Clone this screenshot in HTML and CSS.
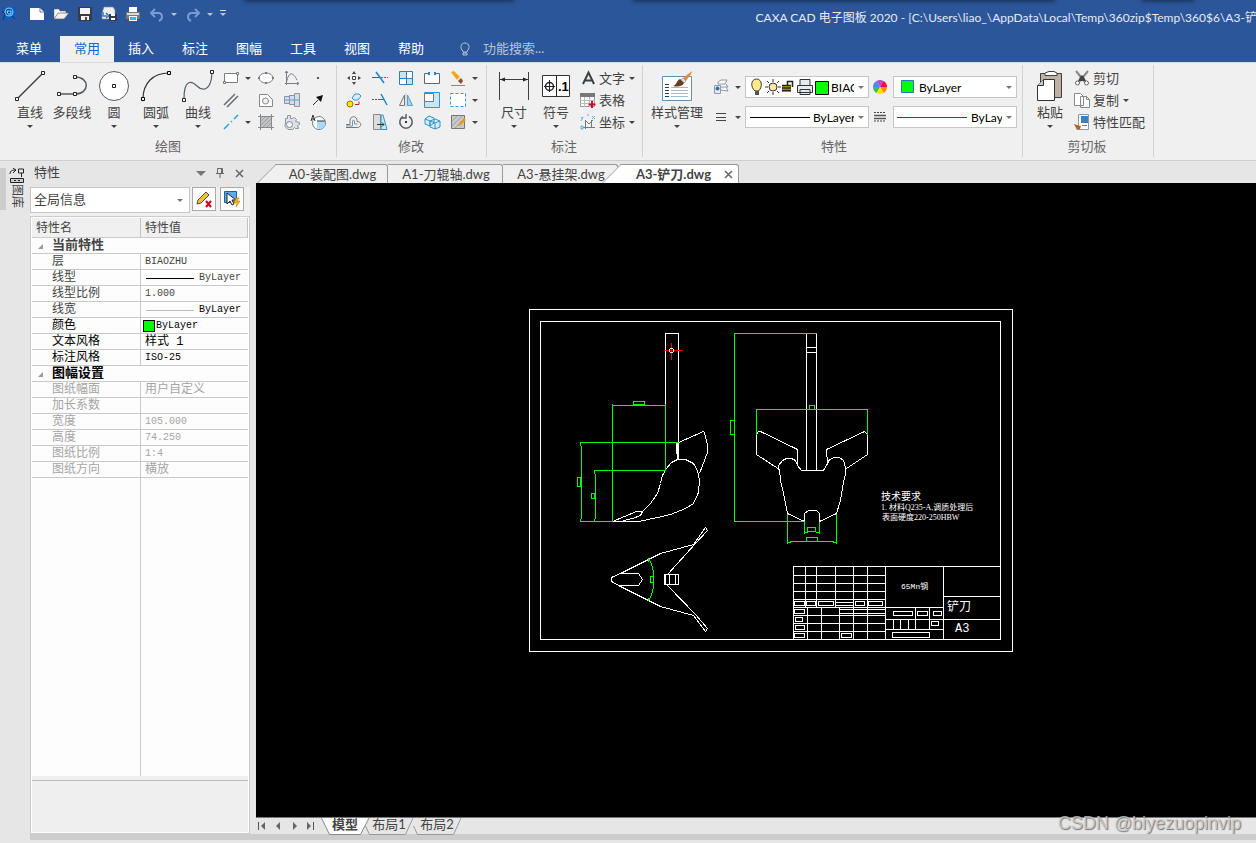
FILE: index.html
```html
<!DOCTYPE html>
<html lang="zh-CN">
  <head>
    <meta charset="UTF-8" />
    <meta name="viewport" content="width=device-width, initial-scale=1.0" />
    <title>CAXA CAD 电子图板 2020</title>
    <link rel="stylesheet" href="styles.css">
  </head>
  <body>
    <header class="title-bar">
      <i class="edge edge-1"></i><i class="edge edge-2"></i><i class="edge edge-3"></i>
      <div class="quick-access">
        <svg class="logo" width="16" height="16" viewBox="0 0 16 16"><path d="M0 1l5 2 2-2 4 1 4-1-1 4 2 3-3 1 2 4-4-2-4 2-5 3 3-6-2-2 1-2z" fill="#0a5cc8"/><circle cx="8" cy="6" r="4.500" fill="#5cc4ff"/><circle cx="8" cy="6" r="3.200" fill="#0b3f9c"/><path d="M6 5h4v3H7z" stroke="#8fe0ff" fill="none"/><path d="M1 5l3 3-2 6M11 10l3 3" stroke="#0a2f80" fill="none"/></svg>
        <button title="新建"><svg width="18" height="16"><path d="M2 2h10l4 4v8H2z" fill="#fff"/><path d="M12 2v4h4" fill="none" stroke="#777"/></svg></button>
        <button title="打开"><svg width="18" height="16"><path d="M2 3h5l1 2h6v3H6l-4 6z" fill="#fff" stroke="#555" stroke-width=".5"/><path d="M6 7h11l-5 6H2z" fill="#f1efe8" stroke="#666" stroke-width=".7"/></svg></button>
        <button title="保存"><svg width="18" height="16"><path d="M2 1h14v14H2z" fill="#3a3a44"/><path d="M4 2h10v6H4zM5 10h8v4H5z" fill="#f4f4f4"/><path d="M9 11h2v3H9z" fill="#444"/></svg></button>
        <button title="另存为"><svg width="18" height="16"><path d="M4 1h9l2 3v9H2V7z" fill="#eee" stroke="#888" stroke-width=".6"/><path d="M3 6v4h4M6 7l3 3-3 2" fill="none" stroke="#2b79c6" stroke-width="1.500"/><path d="M9 8h8v7H9z" fill="#3a3a44"/><path d="M11 8h4v2h-4zM11 12h4v2h-4z" fill="#fff"/></svg></button>
        <button title="打印"><svg width="18" height="16"><path d="M5 1h8v5H5z" fill="#fff"/><path d="M2 6h14v7H2z" fill="#77787e"/><path d="M3 7h12v2H3z" fill="#d9d9d9"/><path d="M5 10h8v5H5z" fill="#fff"/><path d="M6 11h6v3H6z" fill="#36b5e8"/></svg></button>
        <button title="撤销"><svg width="18" height="16"><path d="M7 3L3 7l4 4M3 7h7c3 0 4 2 4 4s-1 3-3 4" fill="none" stroke="#7a9bd4" stroke-width="2"/></svg></button>
        <i class="caret caret-light"></i>
        <button title="重做"><svg width="18" height="16"><path d="M11 3l4 4-4 4M15 7H8c-3 0-4 2-4 4s1 3 3 4" fill="none" stroke="#7a9bd4" stroke-width="2"/></svg></button>
        <i class="caret caret-light"></i>
        <i class="caret caret-light caret-more"></i>
      </div>
      <h1 class="title">CAXA CAD 电子图板 2020 - [C:\Users\liao_\AppData\Local\Temp\360zip$Temp\360$6\A3-铲刀</h1>
    </header>

    <nav class="menu">
      <a href="#" class="file">菜单</a>
      <a href="#" class="active">常用</a>
      <a href="#">插入</a>
      <a href="#">标注</a>
      <a href="#">图幅</a>
      <a href="#">工具</a>
      <a href="#">视图</a>
      <a href="#">帮助</a>
      <label class="search" for="search">
        <svg width="12" height="14"><path d="M4 9C1 7 1 1 6 1s5 6 2 8v1H4zM4 11h4v2H4z" fill="none" stroke="#b9c3d6"/></svg>
      </label>
      <input id="search" class="search-box" type="text" placeholder="功能搜索...">
    </nav>

    <section class="ribbon">
      <div class="group draw-group">
        <div class="tools">
          <button class="big"><svg width="34" height="34"><path d="M4 30L29 5" stroke="#3b3f46" stroke-width="1.500"/><path d="M2.500 28.500h3v3h-3zM28.500 2.500h3v3h-3z" fill="#fff" stroke="#222"/></svg>直线<i class="caret"></i></button>
          <button class="big"><svg width="34" height="34"><path d="M4 25h16c15 0 15-17 0-17" fill="none" stroke="#555b64" stroke-width="1.500"/><path d="M2.500 23.500h3v3h-3zM18.500 23.500h3v3h-3zM18.500 6.500h3v3h-3z" fill="#fff" stroke="#222"/></svg>多段线</button>
          <button class="big"><svg width="34" height="34"><circle cx="17" cy="17" r="14.500" fill="#fff" stroke="#555b64"/><path d="M15.500 15.500h3v3h-3z" fill="#fff" stroke="#222"/></svg>圆<i class="caret"></i></button>
          <button class="big"><svg width="34" height="34"><path d="M4 30C4 14 14 4 30 4" fill="none" stroke="#333" stroke-width="1.200"/><path d="M2.500 28.500h3v3h-3zM28.500 2.500h3v3h-3z" fill="#fff" stroke="#000"/></svg>圆弧<i class="caret"></i></button>
          <button class="big"><svg width="34" height="34"><path d="M3 30c0-21 8-18 13-13S30 23 31 4" fill="none" stroke="#555b64" stroke-width="1.200"/><path d="M1.500 29.500h3v3h-3zM29.500 1.500h3v3h-3z" fill="#fff" stroke="#222"/></svg>曲线<i class="caret"></i></button>
          <div class="small-grid draw-grid">
            <button title="矩形"><svg width="18" height="18"><path d="M2.500 4.500h13v9h-13z" fill="#fff" stroke="#777c85"/><path d="M1.500 12.500h2v2h-2zM14.500 3.500h2v2h-2z" fill="#fff" stroke="#777"/></svg><i class="caret"></i></button>
            <button title="椭圆"><svg width="18" height="18"><ellipse cx="9" cy="9" rx="7" ry="5" fill="#fff" stroke="#777c85"/><path d="M1 8h2v2H1zM15 8h2v2h-2zM8 3h2v2H8zM8 13h2v2H8z" fill="#777c85"/></svg></button>
            <button title="公式曲线"><svg width="18" height="18"><path d="M3.500 2v14M2 14.500h14M3.500 13C6 2 10 3 14 11" fill="none" stroke="#777c85"/><path d="M2 4l1.500-2L5 4M14 13l2 1.500-2 1.500" fill="none" stroke="#777"/></svg></button>
            <button title="点"><svg width="18" height="18"><path d="M8 8h2v2H8z" fill="#555"/></svg></button>
            <button title="平行线"><svg width="18" height="18"><path d="M2 14L13 3M5 16L16 5" stroke="#666b74" stroke-width="1.500"/></svg></button>
            <button title="局部放大"><svg width="18" height="18"><path d="M2.500 3.500h8l5 5v7h-13z" fill="#fff" stroke="#888"/><circle cx="8.500" cy="10" r="3" fill="#f0f0f0" stroke="#888"/></svg></button>
            <button title="孔轴"><svg width="18" height="18"><path d="M1.500 5.500h5v-1h5v-2h5v13h-5v-2h-5v-1h-5z" fill="#d6dde8" stroke="#8a93a2"/><path d="M1 9h16" stroke="#4aa3df"/><path d="M6.500 4v9M11.500 3v12" stroke="#8a93a2"/></svg></button>
            <button title="箭头"><svg width="18" height="18"><path d="M4 14l5-5" stroke="#333"/><path d="M14 4l-2 7-5-5z" fill="#111"/></svg></button>
            <button title="中心线"><svg width="18" height="18"><path d="M2 16l5-5M9 9l1-1M12 6l4-4" stroke="#27a5e0" stroke-width="1.500"/></svg><i class="caret"></i></button>
            <button title="填充"><svg width="18" height="18"><path d="M4 4h10v10H4z" fill="#bfc1c5"/><path d="M3.500 1v16M14.500 1v16M1 3.500h16M1 14.500h16" stroke="#888"/><path d="M4 8l4-4M4 12l8-8M6 14l8-8M10 14l4-4" stroke="#a0a2a6"/></svg></button>
            <button title="齿轮"><svg width="18" height="18"><path d="M2.500 9V5.500h2v-3h3v3h2l2-1 2 2-1 2 4 1v2l-2 1 1 3h-3l-1-1-2 2H5l-3-3z" fill="#dde1e8" stroke="#8d95a2"/><circle cx="6.500" cy="11.500" r="3" fill="#fff" stroke="#7d8592"/></svg></button>
            <button title="圆形阵列"><svg width="18" height="18"><circle cx="10" cy="10" r="6.500" fill="#fff" stroke="#777c85"/><path d="M8 8h8c1 5-2 8-6 8-1 0-2-1-2-2z" fill="#a8dbf7"/><path d="M2 8l2-6 2 6M3 6h2M8 8h8" stroke="#333" fill="none"/></svg></button>
          </div>
        </div>
        <h2>绘图</h2>
      </div>

      <div class="group">
        <div class="tools">
          <div class="small-grid edit-grid">
            <button title="平移"><svg width="18" height="18"><path d="M7.500 7.500h3v3h-3z" fill="#fff" stroke="#444"/><path d="M9 2l2 3H7zM9 16l2-3H7zM2 9l3-2v4zM16 9l-3-2v4z" fill="#444a52"/></svg></button>
            <button title="裁剪"><svg width="18" height="18"><path d="M1 8.500h8" stroke="#555b64"/><path d="M10 8.500h2M13 8.500h2M16 8.500h1" stroke="#1d84d0"/><path d="M5 3l8 11" stroke="#1d84d0" stroke-width="1.500"/></svg></button>
            <button title="阵列"><svg width="18" height="18"><path d="M2.500 2.500h13v13h-13z" fill="#fff" stroke="#2f7fb8"/><path d="M3 3h6v6H3zM10 10h5v5h-5z" fill="#bfe6fa"/><path d="M2 9.500h14M9.500 2v14" stroke="#2f7fb8"/></svg></button>
            <button title="打断"><svg width="18" height="18"><path d="M5 4.500H1.500v10h15v-10H13" fill="#fff" stroke="#666"/><path d="M5 3h2v3H5zM11 3h2v3h-2z" fill="#1d84d0"/></svg></button>
            <button title="删除"><svg width="18" height="18"><path d="M2 3l3-1 6 6-3 3z" fill="#f5a51c"/><path d="M8 11l3-3 1 1-3 3z" fill="#eee"/><path d="M9 12l3-3 2 3-2 3z" fill="#8b4a2c"/><path d="M2 16.500h14" stroke="#888"/></svg><i class="caret"></i></button>
            <button title="复制"><svg width="18" height="18"><circle cx="5" cy="13" r="3" fill="#ffe500" stroke="#8a7a00"/><path d="M7 7l3-4h4l2 2-3 4H9z" fill="#d3effc" stroke="#3b93c9"/><path d="M10 13.500h4v-3" fill="none" stroke="#c22"/></svg></button>
            <button title="延伸"><svg width="18" height="18"><path d="M1 8.500h2M4 8.500h2M7 8.500h6" stroke="#555b64"/><path d="M10 3l6 11" stroke="#1d84d0" stroke-width="1.500"/></svg></button>
            <button title="镜像"><svg width="18" height="18"><path d="M7.500 4v10.500h-5z" fill="#eee" stroke="#777"/><path d="M10.500 4v10.500h5z" fill="#9dd7f5" stroke="#5b9fc5"/><path d="M9 2v14" stroke="#ccc"/></svg></button>
            <button title="缩放"><svg width="18" height="18"><path d="M1.500 1.500h15v15h-15z" fill="#c5e9fb" stroke="#3b93c9"/><path d="M1.500 2.500h9v8h-9z" fill="#fff" stroke="#777"/></svg></button>
            <button title="选择"><svg width="18" height="18"><path d="M1.500 2.500h15v13h-15z" fill="#fff" stroke="#3399cc" stroke-dasharray="3 2"/></svg><i class="caret"></i></button>
            <button title="等距线"><svg width="18" height="18"><path d="M1 11.500h4v-4c0-5 7-5 7 0v1c5 0 5 6 0 6H1" fill="none" stroke="#777"/><path d="M1 13h6.500V8c0-1 2-1 2 0v3h3" fill="none" stroke="#6b95b5"/></svg></button>
            <button title="拉伸"><svg width="18" height="18"><path d="M2.500 1.500h7v15h-7z" fill="#ddd" stroke="#888"/><path d="M10 2h2l4 14.500h-6z" fill="#c5e9fb" stroke="#3b93c9"/><path d="M6 11.500h7M11 9.500l2 2-2 2" fill="none" stroke="#333"/></svg></button>
            <button title="旋转"><svg width="18" height="18"><path d="M6 3.500a6.200 6.200 0 1 0 6 0M9 1v4H5" fill="none" stroke="#555b64" stroke-width="1.500"/><path d="M8 8h2v2H8z" fill="#333"/></svg></button>
            <button title="分解"><svg width="18" height="18"><path d="M2 6l4-3 5 2v5l-4 3-5-2zM7 8l5-2 5 2v6l-5 2-5-2z" fill="#d3effc" stroke="#3b8fc4"/><path d="M2 6l5 2v5M7 8l5 2 5-2M12 10v6" fill="none" stroke="#3b8fc4"/></svg></button>
            <button title="编辑填充"><svg width="18" height="18"><path d="M2.500 2.500h13v13h-13z" fill="#c7c8ca" stroke="#777"/><path d="M3 8l5-5M3 13L13 3M6 15l9-9" stroke="#a0a2a6"/><path d="M9 13l1-3 5-5 2 2-5 5z" fill="#e59b2b"/></svg><i class="caret"></i></button>
          </div>
        </div>
        <h2>修改</h2>
      </div>

      <div class="group note-group">
        <div class="tools">
          <button class="big"><svg width="34" height="34"><path d="M2.500 3v28M31.500 3v28M3 10.500h28" stroke="#3b3f46"/><path d="M3 10.500l5-2v4zM31 10.500l-5-2v4z" fill="#222"/></svg>尺寸<i class="caret"></i></button>
          <button class="big"><svg width="34" height="34"><path d="M3.500 6.500h27v21h-27z" fill="#fff" stroke="#333"/><path d="M17.500 6v22M10.500 11v12M5 17.500h11" stroke="#222"/><circle cx="10.500" cy="17.500" r="4" fill="none" stroke="#222" stroke-width="1.500"/><text x="19" y="22" class="icon-text">.1</text></svg>符号<i class="caret"></i></button>
          <div class="rows">
            <button class="row"><svg width="18" height="18"><path d="M4 15L9.500 3.500l5.500 11.500M6 11.500h7" fill="none" stroke="#3b3f46" stroke-width="2"/></svg>文字<i class="caret"></i></button>
            <button class="row"><svg width="18" height="18"><path d="M1.500 3.500h14v12h-14z" fill="#fff" stroke="#999"/><path d="M1 2h15v4H1z" fill="#777"/><path d="M1 9.500h15M1 12.500h15M5.500 6v10M10.500 6v10" stroke="#bbb"/><path d="M13 10v7M9.500 13.500h7" stroke="#c8102e" stroke-width="2"/></svg>表格</button>
            <button class="row"><svg width="18" height="18"><path d="M6.500 7v9M4 14.500h12M6 7l4 4 4-4M12.500 7v7" fill="none" stroke="#777"/><path d="M2 4l2 2M4 4l-2 4M8 2h2M13 3l3 3M16 3l-3 3M2 13h2v3H2z" stroke="#5fb0dc" fill="none"/></svg>坐标<i class="caret"></i></button>
          </div>
        </div>
        <h2>标注</h2>
      </div>

      <div class="group props-group">
        <div class="tools">
          <button class="big wide"><svg width="34" height="34"><path d="M2.500 7.500h29v24h-29z" fill="#fff" stroke="#6c8ca8"/><path d="M5 15.500h4M5 18.500h4M5 21.500h4M5 24.500h4M5 27.500h4" stroke="#26415c"/><path d="M11 18.500h17M11 21.500h17M11 24.500h17M11 27.500h17" stroke="#aab8c6"/><path d="M32 2l-9 7 3 3 5-7z" fill="#d9903f"/><path d="M23 9l3 3-2 2-4-3z" fill="#ddd" stroke="#777" stroke-width=".5"/><path d="M20 10l4 4c-2 4-7 4-11 3 4-1 3-5 7-7z" fill="#6b3b1e"/></svg>样式管理<i class="caret"></i></button>
          <div class="layer-grid">
            <button title="图层"><svg width="18" height="18"><path d="M6 4l3-2h6l-2 4H6zM8 9h8l-2-3M9 12l7 1-2-4" fill="#fff" stroke="#8f9aa8"/><path d="M2.500 7.500h6v8h-6z" fill="#e6eaf0" stroke="#8f9aa8"/><circle cx="5.500" cy="10.500" r="2" fill="#39739d"/></svg><i class="caret"></i></button>
            <div class="combo">
              <svg width="80" height="18" viewBox="0 0 80 18"><path d="M6 13C1 9 2 1 7.500 1S14 9 9.500 13z" fill="#ffe98a" stroke="#333"/><path d="M6 13h4v4H6z" fill="#555"/><circle cx="24" cy="9" r="4" fill="#ffe9a8" stroke="#333"/><path d="M24 1v3M24 14v3M16 9h3M29 9h3M18 3l2 2M28 13l2 2M30 3l-2 2M20 13l-2 2" stroke="#333"/><path d="M33 7h9v7h-9z" fill="#b8b000"/><path d="M33 7.500h9M33 10h9M33 12.500h9M38.500 7V3.500h5V9" fill="none" stroke="#222" stroke-width="1.500"/><path d="M51 1.500h10v6H51zM48.500 7.500h15v7h-15zM51 11.500h10v5H51z" fill="#e3ebf2" stroke="#333"/><path d="M66.500 3.500h13v13h-13z" fill="#0f0" stroke="#000"/></svg>
              <select aria-label="图层"><option>BIAOZHU</option></select><i class="caret"></i>
            </div>
            <button title="颜色"><svg width="18" height="18" viewBox="-9 -9 18 18"><path d="M0 0L-3.500-6A7 7 0 0 1 3.500-6z" fill="#b34bd8"/><path d="M0 0L3.500-6A7 7 0 0 1 7 0z" fill="#f04"/><path d="M0 0H7A7 7 0 0 1 3.500 6z" fill="#ff8a00"/><path d="M0 0L3.500 6A7 7 0 0 1-3.500 6z" fill="#ffe100"/><path d="M0 0L-3.500 6A7 7 0 0 1-7 0z" fill="#3ac24a"/><path d="M0 0H-7A7 7 0 0 1-3.500-6z" fill="#4a86ff"/></svg></button>
            <div class="combo">
              <svg width="20" height="14"><path d="M4.500 .5h12v12h-12z" fill="#0f0" stroke="#2f6fc0"/></svg>
              <select aria-label="颜色"><option>ByLayer</option></select><i class="caret"></i>
            </div>
            <button title="线型"><svg width="18" height="18"><path d="M4 5.500h10M4 9.500h10M4 12.500h10" stroke="#444"/></svg><i class="caret"></i></button>
            <div class="combo">
              <svg width="62" height="3"><path d="M1 1.500h60" stroke="#000"/></svg>
              <select aria-label="线型"><option>ByLayer</option></select><i class="caret"></i>
            </div>
            <button title="线宽"><svg width="18" height="18"><path d="M3 4.500h12M3 13h12" stroke="#444" stroke-dasharray="2 1"/><path d="M3 7.500h12M3 10.500h12" stroke="#555" stroke-width="1.500"/></svg></button>
            <div class="combo">
              <svg width="72" height="3"><path d="M0 1.500h70" stroke="#e00000"/></svg>
              <select aria-label="线宽"><option>ByLayer</option></select><i class="caret"></i>
            </div>
          </div>
        </div>
        <h2>特性</h2>
      </div>

      <div class="group clip-group">
        <div class="tools">
          <button class="big"><svg width="34" height="34"><path d="M7.500 4.500h21v24h-21z" fill="#bdb1a4" stroke="#3b3f46"/><path d="M12 6.500V4l4-1.500h5L24 4v2.500z" fill="#fff" stroke="#3b3f46"/><path d="M10.500 10.500h11v21h-17v-15z" fill="#fff" stroke="#333"/><path d="M10.500 10.500v6h-6" fill="#ccc" stroke="#333"/></svg>粘贴<i class="caret"></i></button>
          <div class="rows">
            <button class="row"><svg width="18" height="18"><path d="M3 2l9 11M15 2L6 13" stroke="#888" stroke-width="2"/><path d="M7 8l2-2 2 2 2 4H5z" fill="#444"/><circle cx="4.500" cy="14" r="2" fill="#fff" stroke="#666"/><circle cx="13.500" cy="14" r="2" fill="#fff" stroke="#666"/></svg>剪切</button>
            <button class="row"><svg width="18" height="18"><path d="M1.500 2.500h6l3 3v9h-9zM7.500 5.500h6l3 3v8h-9z" fill="#fff" stroke="#888"/><path d="M13.500 5.500v3h3" fill="none" stroke="#888"/></svg>复制<i class="caret"></i></button>
            <button class="row"><svg width="18" height="18"><path d="M5.500 1.500h10v15h-10z" fill="#fff" stroke="#8b9aa9"/><path d="M8 3h7v7H8z" fill="#3f7fbe"/><path d="M9 12.500h5" stroke="#777"/><path d="M1 11l3 1 4 1-1 3-3 1z" fill="#b0661f"/></svg>特性匹配</button>
          </div>
        </div>
        <h2>剪切板</h2>
      </div>
    </section>

    <main class="workspace">
      <aside class="library">
        <button>
          <svg width="16" height="16"><path d="M1 6c0-3 2-4 5-4M4 0l3 2-3 3M9.500 1v4h5V1zM12.500 5v4" fill="none" stroke="#222"/><path d="M1.500 10.500h13v4h-13z" fill="#ccc" stroke="#222"/><path d="M5 12.500h2M9 12.500h2" stroke="#222"/></svg>
          <span>图库</span>
        </button>
      </aside>

      <section class="properties">
        <header class="panel-title">
          <h2>特性</h2>
          <button title="选项"><svg width="12" height="12"><path d="M1 4h10L6 9z" fill="#777"/></svg></button>
          <button title="固定"><svg width="12" height="12"><path d="M3.500 6V1.500h5V6M2 6.500h8M6 7v4M7.500 2v4" fill="none" stroke="#666"/></svg></button>
          <button title="关闭"><svg width="12" height="12"><path d="M3 3l7 7M10 3l-7 7" stroke="#666" stroke-width="1.500"/></svg></button>
        </header>
        <div class="selector">
          <div class="combo"><select aria-label="对象"><option>全局信息</option></select><i class="caret"></i></div>
          <button title="清除选择"><svg width="18" height="18"><path d="M2 14l1-4 8-8 3 3-8 8z" fill="#f4c430" stroke="#544"/><path d="M11 11l5 6M16 11l-5 6" stroke="#d0021b" stroke-width="2"/></svg></button>
          <button title="快速选择"><svg width="18" height="18"><path d="M1.500 1.500h12v11h-12z" fill="#5aa9ea" stroke="#1f5fa8"/><path d="M4 3v11l3-3 2 4 2-1-2-4h4z" fill="#fff" stroke="#222"/><path d="M13 8l-2 5h3l-1 4 4-6h-3l2-3z" fill="#ffb400" stroke="#b86b00" stroke-width=".5"/></svg></button>
        </div>
        <div class="sheet">
          <table>
            <thead>
              <tr><th class="name">特性名</th><th>特性值</th></tr>
            </thead>
            <tbody>
              <tr class="section soft"><th colspan="2"><i class="fold"></i>当前特性</th></tr>
              <tr class="soft"><td>层</td><td>BIAOZHU</td></tr>
              <tr class="soft"><td>线型</td><td><div class="sample"><i class="rule"></i>ByLayer</div></td></tr>
              <tr class="soft"><td>线型比例</td><td>1.000</td></tr>
              <tr><td class="soft">线宽</td><td><div class="sample"><i class="rule thin"></i>ByLayer</div></td></tr>
              <tr><td>颜色</td><td><div class="sample"><i class="swatch"></i>ByLayer</div></td></tr>
              <tr><td>文本风格</td><td class="cn">样式 1</td></tr>
              <tr><td>标注风格</td><td>ISO-25</td></tr>
              <tr class="section"><th colspan="2"><i class="fold"></i>图幅设置</th></tr>
              <tr class="off"><td>图纸幅面</td><td class="cn">用户自定义</td></tr>
              <tr class="off"><td>加长系数</td><td></td></tr>
              <tr class="off"><td>宽度</td><td>105.000</td></tr>
              <tr class="off"><td>高度</td><td>74.250</td></tr>
              <tr class="off"><td>图纸比例</td><td>1:4</td></tr>
              <tr class="off"><td>图纸方向</td><td class="cn">横放</td></tr>
            </tbody>
          </table>
          <div class="blank"><div></div></div>
          <div class="hint"></div>
        </div>
      </section>

      <section class="document">
        <nav class="doc-tabs">
          <a href="#" class="slant">A0-装配图.dwg</a>
          <a href="#">A1-刀辊轴.dwg</a>
          <a href="#">A3-悬挂架.dwg</a>
          <a href="#" class="slant current">A3-铲刀.dwg<svg width="9" height="9"><path d="M1 1l7 7M8 1L1 8" stroke="#666" stroke-width="1.500"/></svg></a>
        </nav>

        <div class="canvas">
          <svg width="500" height="360" viewBox="526 303 500 360" class="drawing">
            <g transform="translate(.5 .5)">
              <!-- sheet border -->
              <path d="M529 309H1012V651H529zM540 321H1000V639H540z"/>

              <!-- side view -->
              <path d="M665 403V333H678V459M677 443V459"/>
              <path d="M612 521L636 511H642L650 503L657 493L660 483L662 475L666 468L671 462L677 459H685L693 463L697 470L699 480L698 492L693 503L685 508L670 514L657 517L638 521H612"/>
              <path d="M642 511L640 515L632 518L623 520"/>
              <path d="M676 451V443L703 431L704 432L707 445V452L699 473M676 451L678 459"/>
              <g class="dim">
                <path d="M612 521V403M612 405H665M665 403V470M579 442H678M593 470H665M579 521H612"/>
                <path d="M580 442V445M581 445V518M580 518V521M594 470V473M595 473V518M594 518V521"/>
                <path d="M633 401H644V404H633zM577 477H580V486H577zM591 493H594V498H591z"/>
              </g>
              <path d="M663 350H682M671 342V359" class="origin"/>
              <circle cx="671" cy="350" r="2"/>

              <!-- front view -->
              <path d="M806 333V470M816 333V470M806 347H816M806 352H816"/>
              <path d="M779 469L756 454V434L758 431H760L797 449V465"/>
              <path d="M846 468L867 454V434L864 431L826 449V456L827 457V463"/>
              <path d="M778 469V465L782 460L786 458H791L795 460L797 465L801 470H823L826 465L829 459L834 457H839L843 460L845 467V473L842 487L840 500L836 513L819 521V513L816 510H808L804 513V521L787 513L783 493L780 480L779 469"/>
              <g class="dim">
                <path d="M733 333H816M734 333V521M733 521H804M756 408V434M867 408V434M756 409H867"/>
                <path d="M787 513V543M836 513V543M787 542H790V541H833V542H836M804 521V533M819 521V533M804 532H807V531M819 532H816V531"/>
                <path d="M730 420H734V434H730zM809 405H814V409H809zM807 527H815V531H807zM806 537H817V541H806z"/>
              </g>

              <!-- top view -->
              <path d="M611 579V577L620 573L660 553L693 544L705 527L707 530L695 543L667 574"/>
              <path d="M611 579V581L620 586L660 606L693 615L705 631L707 628L695 614L667 585"/>
              <path d="M618 573H638L642 579L638 585H618M664 574H678V584H664zM665 574V584M669 574V584M675 574V584"/>
              <g class="dim">
                <path d="M648 558L651 563L653 572V586L651 595L648 600M648 558V561M648 597V600M650 576H653V582H650z"/>
              </g>

              <!-- title block -->
              <path d="M793 639V566H1000M885 566V639M943 566V639M943 596H1000M943 619H1000"/>
              <path d="M793 575H885M793 583H885M793 591H885M793 599H885M793 607H943M793 615H885M793 623H885M793 631H885"/>
              <path d="M805 566V607M816 566V607M835 566V607M853 566V607M867 566V607"/>
              <path d="M807 607V639M821 607V639M839 607V639M853 607V639M867 607V639M835 602H853M835 605H853M839 609H885M839 613H885"/>
              <path d="M794 601H804V605H794zM806 601H815V605H806zM818 601H833V605H818zM855 601H864V605H855zM868 601H882V605H868z"/>
              <path d="M794 609H804V613H794zM795 617H802V621H795zM795 625H804V629H795zM794 633H804V637H794zM841 633H851V637H841z"/>
              <path d="M885 619H943M885 629H943M915 607V629M929 607V629M893 619V629M900 619V629M908 619V629"/>
              <path d="M893 611H912V615H893zM917 611H927V615H917zM933 611H941V615H933zM931 621H938V625H931zM892 632H929V637H892z"/>
            </g>
            <text x="881" y="500" class="head-note">技术要求</text>
            <text x="881" y="510" class="small-note">1. 材料Q235-A,调质处理后</text>
            <text x="882" y="520" class="small-note">表面硬度220-250HBW</text>
            <text x="901" y="589" class="material">65Mn钢</text>
            <text x="947" y="611" class="part">铲刀</text>
            <text x="955" y="632" class="part">A3</text>
          </svg>
        </div>

        <nav class="layout-tabs">
          <button title="第一页"><svg width="12" height="12"><path d="M2.500 2v8" stroke="#555"/><path d="M9 2v8L5 6z" fill="#666"/></svg></button>
          <button title="上一页"><svg width="12" height="12"><path d="M8 2v8L4 6z" fill="#666"/></svg></button>
          <button title="下一页"><svg width="12" height="12"><path d="M5 2v8l4-4z" fill="#666"/></svg></button>
          <button title="最后一页"><svg width="12" height="12"><path d="M9.500 2v8" stroke="#555"/><path d="M3 2v8l4-4z" fill="#666"/></svg></button>
          <a href="#" class="current"><svg width="49" height="17"><path d="M.5 0l8 16.500h31L48 0" fill="#fff" stroke="#888"/></svg><span>模型</span></a>
          <a href="#"><svg width="49" height="17"><path d="M.5 8l4 8.500h36L48 0" fill="none" stroke="#999"/></svg><span>布局1</span></a>
          <a href="#"><svg width="49" height="17"><path d="M.5 8l4 8.500h36L48 0" fill="none" stroke="#999"/></svg><span>布局2</span></a>
        </nav>
      </section>
    </main>
    <footer class="bottom-bar"></footer>
    <p class="watermark">CSDN @biyezuopinvip</p>
  </body>
</html>
```
FILE: styles.css
```css
* {
  box-sizing: border-box;
}

body {
  display: flex;
  flex-direction: column;
  min-height: 100vh;
  margin: 0;
  overflow: hidden;
  position: relative;
  font-family: Lato, "Noto Sans CJK SC", sans-serif;
  font-size: 13px;
  color: #444;
  background-color: #e6e6e6;
}

button,
select,
input {
  font: inherit;
  color: inherit;
  padding: 0;
  border: none;
  background: none;
}

a {
  color: inherit;
  text-decoration: none;
}

h1,
h2,
p {
  margin: 0;
  font-size: 13px;
  font-weight: normal;
}

svg {
  display: block;
  flex: none;
}

.caret {
  flex: none;
  width: 0;
  height: 0;
  border: 3px solid transparent;
  border-top-color: #444;
  border-bottom: none;
}

.caret-light {
  border-top-color: #b9c3d6;
}

/* title bar */
.title-bar {
  display: flex;
  align-items: center;
  height: 36px;
  position: relative;
  overflow: hidden;
  color: #e6ebf4;
  background-color: #2b579a;
}

.edge {
  position: absolute;
  top: -4px;
  height: 4px;
  box-shadow: 0 0 5px 1px #14284a;
}

.edge-1 {
  left: 245px;
  width: 268px;
}

.edge-2 {
  left: 634px;
  width: 420px;
}

.edge-3 {
  left: 1143px;
  width: 50px;
}

.quick-access {
  display: flex;
  align-items: center;
  gap: 6px;
  flex: 0 0 60%;
  padding: 0 0 8px 1px;
}

.logo {
  margin-right: 5px;
}

.quick-access .caret {
  margin: 0 1px 0 -1px;
}

.quick-access .caret-more {
  margin-left: 0;
  position: relative;
}

.caret-more::before {
  content: "";
  position: absolute;
  left: -3px;
  top: -6px;
  width: 6px;
  height: 1px;
  background-color: #d6dce8;
}

.title {
  padding: 0 0 4px 2px;
  font-size: 12px;
  white-space: nowrap;
}

/* menu */
.menu {
  display: flex;
  align-items: stretch;
  height: 26px;
  padding-left: 2px;
  color: #fff;
  background-color: #2b579a;
}

.menu a {
  width: 54px;
  line-height: 24px;
  text-align: center;
}

.menu .file {
  margin-right: 4px;
}

.menu .active {
  color: #1765c1;
  background-color: #f0f0f0;
}

.search {
  display: flex;
  align-items: center;
  margin: 0 12px 0 21px;
}

.search-box {
  width: 120px;
  height: 24px;
}

.search-box::placeholder {
  color: #b9c3d6;
}

/* ribbon */
.ribbon {
  display: flex;
  height: 99px;
  padding: 2px 0 3px;
  border-top: 1px solid #dadada;
  border-bottom: 1px solid #cfcfcf;
  background-color: #f0f0f0;
}

.group {
  display: flex;
  flex-direction: column;
  padding: 2px 9px 0 8px;
  border-right: 1px solid #d2d2d2;
}

.group h2 {
  height: 20px;
  line-height: 19px;
  text-align: center;
  color: #666;
}

.tools {
  display: flex;
  flex: 1;
}

.big {
  display: flex;
  flex-direction: column;
  align-items: center;
  width: 42px;
  height: 66px;
  padding-top: 2px;
  line-height: 18px;
  white-space: nowrap;
}

.big .caret {
  margin-top: 4px;
}

.wide {
  width: 52px;
}

.small-grid {
  display: grid;
  grid-auto-rows: 22px;
}

.draw-group {
  padding-left: 9px;
}

.draw-grid {
  grid-template-columns: 35px 26px 26px 18px;
  margin-left: 3px;
}

.edit-grid {
  grid-template-columns: 26px 26px 26px 26px 28px;
}

.small-grid button,
.layer-grid button,
.row {
  display: flex;
  align-items: center;
}

.small-grid .caret,
.layer-grid .caret {
  margin-left: 5px;
}

.note-group {
  padding: 2px 7px 0 6px;
}

.rows {
  display: grid;
  grid-auto-rows: 22px;
  margin-left: 2px;
}

.row {
  line-height: 18px;
}

.row svg {
  margin-right: 2px;
}

.row .caret {
  margin-left: 4px;
}

.props-group {
  padding: 2px 5px 0 8px;
}

.layer-grid {
  display: grid;
  grid-template-columns: 33px 124px 24px 124px;
  grid-auto-rows: 30px;
  align-items: center;
  margin: 5px 0 0 9px;
}

.layer-grid > button:nth-child(4n + 3) {
  margin-left: 2px;
}

.combo {
  display: flex;
  align-items: center;
  height: 22px;
  padding: 0 4px 0 3px;
  border: 1px solid #c6c6c6;
  color: #000;
  background-color: #fff;
}

.combo select {
  flex: 1;
  min-width: 0;
  margin-left: 2px;
  appearance: none;
  overflow: hidden;
  text-overflow: clip;
  white-space: nowrap;
  font-size: 12px;
}

.combo .caret {
  margin-left: 4px;
  border-top-color: #777;
}

.icon-text {
  font: bold 13px "Liberation Sans", sans-serif;
}

.clip-group {
  padding: 2px 8px 0 6px;
}

/* workspace */
.workspace {
  display: flex;
  flex: 1;
}

.library {
  width: 30px;
  padding-top: 7px;
}

.library button {
  display: flex;
  flex-direction: column;
  align-items: center;
  width: 26px;
  height: 42px;
  padding-left: 2px;
  border-left: 6px solid #cdcdcd;
}

.library span {
  writing-mode: vertical-rl;
  text-orientation: sideways;
  line-height: 16px;
  font-size: 12px;
}

.properties {
  display: flex;
  flex-direction: column;
  width: 220px;
  margin-right: 6px;
  background-color: #f0f0f0;
}

.panel-title {
  display: flex;
  align-items: center;
  gap: 7px;
  height: 26px;
  padding: 0 5px 2px 4px;
  background-color: #e6e6e6;
}

.panel-title h2 {
  flex: 1;
  line-height: 20px;
  padding-bottom: 2px;
}

.selector {
  display: flex;
  gap: 4px;
  margin-bottom: 3px;
}

.selector .combo {
  width: 160px;
  height: 26px;
  margin-right: -2px;
  padding-right: 6px;
}

.selector select {
  margin-left: 0;
  padding-bottom: 2px;
  font-size: 13px;
  color: #444;
}

.selector button {
  display: flex;
  align-items: center;
  justify-content: center;
  width: 24px;
  height: 24px;
  border: 1px solid #aaa;
  background-color: #fdfdfd;
}

.sheet {
  display: flex;
  flex-direction: column;
  flex: 1;
  padding: 1px;
  border: 1px solid #ccc;
  background-color: #fdfdfd;
}

table {
  width: 100%;
  border-collapse: separate;
  border-spacing: 0;
  table-layout: fixed;
  font-family: "Liberation Mono", "Noto Sans CJK SC", monospace;
  font-size: 12px;
  line-height: 14px;
  color: #000;
}

thead th {
  height: 20px;
  padding: 3px 4px 0;
  border-right: 1px solid #c2c2c2;
  border-bottom: 1px solid #ccc;
  font-weight: normal;
  text-align: left;
  color: #444;
  background-color: #f0f0f0;
}

thead .name {
  width: 109px;
}

tbody td,
tbody th {
  height: 16px;
  padding: 1px 4px 0 20px;
  border-bottom: 1px solid #c8c8c8;
  text-align: left;
  white-space: nowrap;
}

tbody td:first-child {
  border-right: 1px solid #c8c8c8;
}

tbody td:last-child {
  padding-left: 4px;
  font-size: 10px;
}

tbody td.cn:last-child {
  font-size: 12px;
}

.section th {
  position: relative;
  font-size: 13px;
}

.fold {
  position: absolute;
  left: 6px;
  top: 6px;
  border-left: 5px solid transparent;
  border-bottom: 5px solid #999;
}

.soft {
  color: #444;
}

.off {
  color: #a5a5a5;
}

.sample {
  display: flex;
  align-items: center;
}

.rule {
  width: 48px;
  margin: 0 5px 0 1px;
  border-top: 1px solid #000;
}

.thin {
  border-color: #bbb;
}

.swatch {
  width: 12px;
  height: 12px;
  margin-left: -2px;
  margin-right: 1px;
  border: 1px solid #000;
  background-color: #0f0;
}

.blank {
  display: flex;
  flex: 1;
}

.blank div {
  width: 109px;
  border-right: 1px solid #c8c8c8;
}

.hint {
  height: 56px;
  border-top: 4px solid #efefef;
  background-color: #efefef;
  box-shadow: inset 0 1px #bbb;
}

.document {
  display: flex;
  flex-direction: column;
  flex: 1;
  min-width: 0;
}

.doc-tabs {
  display: flex;
  height: 22px;
  padding-top: 3px;
}

.doc-tabs a {
  display: flex;
  align-items: center;
  justify-content: center;
  position: relative;
  width: 115px;
  padding-left: 2px;
  border-top: 1px solid #999;
  border-right: 1px solid #999;
  border-top-right-radius: 3px;
  line-height: 16px;
  background-color: #f0f0f0;
  white-space: nowrap;
}

.doc-tabs .slant {
  width: 112px;
  margin-left: 20px;
}

.doc-tabs .slant::before {
  content: "";
  position: absolute;
  left: -10px;
  top: -1px;
  width: 20px;
  height: 19px;
  border-top: 1px solid #999;
  border-left: 1px solid #999;
  background-color: inherit;
  transform: skewX(-45deg);
}

.doc-tabs .current {
  width: 118px;
  margin-left: 3px;
  justify-content: flex-end;
  padding-right: 5px;
  font-weight: bold;
  background-color: #fff;
}

.doc-tabs svg {
  margin-left: 13px;
}

.canvas {
  flex: 1;
  position: relative;
  padding: 120px 0 0 270px;
  overflow: hidden;
  background-color: #000;
}

.drawing {
  fill: none;
  stroke: #fff;
  shape-rendering: crispEdges;
}

.dim {
  stroke: #0f0;
}

.origin {
  stroke: #f00;
}

.drawing text {
  fill: #fff;
  stroke: none;
  font-family: "Liberation Serif", "Noto Sans CJK SC", serif;
}

.drawing .head-note {
  font-size: 10px;
}

.drawing .small-note {
  font-size: 8px;
}

.drawing .material {
  font: 8px "Liberation Mono", "Noto Sans CJK SC", monospace;
}

.drawing .part {
  font: 12px "Liberation Mono", "Noto Sans CJK SC", monospace;
}

.layout-tabs {
  display: flex;
  align-items: center;
  height: 17px;
  border-top: 1px solid #777;
}

.layout-tabs button {
  width: 16px;
}

.layout-tabs a {
  position: relative;
  width: 48px;
  height: 16px;
  line-height: 13px;
  text-align: center;
}

.layout-tabs .current {
  margin: 0 -4px 0 1px;
  font-weight: bold;
}

.layout-tabs a svg {
  position: absolute;
  left: 0;
  top: 0;
}

.layout-tabs span {
  position: relative;
}

.bottom-bar {
  height: 9px;
  margin-left: 30px;
  border-bottom: 3px solid #e6e6e6;
  background-color: #cdcdcd;
}

.watermark {
  position: absolute;
  right: 15px;
  bottom: 9px;
  font: 18px/22px "Liberation Sans", sans-serif;
  color: rgba(205, 205, 205, 0.8);
  text-shadow: 1px 1px 1px #777;
}
```
